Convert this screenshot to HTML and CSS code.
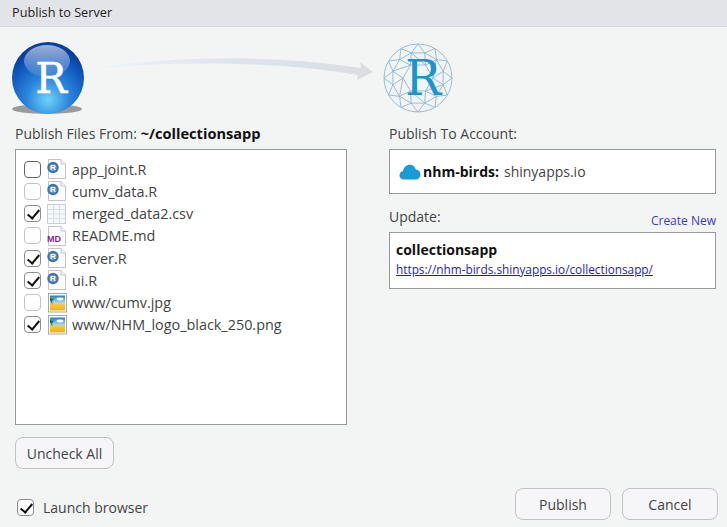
FILE: index.html
```html
<!DOCTYPE html>
<html lang="en">
  <head>
    <meta charset="UTF-8" />
    <title>Publish to Server</title>
    <link rel="stylesheet" href="styles.css">
  </head>

  <body>
    <svg class="defs" width="0" height="0">
      <defs>
        <radialGradient id="ball" cx="50%" cy="80%" r="70%">
          <stop offset="0" stop-color="#6fd3f6" />
          <stop offset="0.42" stop-color="#2b86dd" />
          <stop offset="0.8" stop-color="#1058bd" />
          <stop offset="1" stop-color="#0b3f9c" />
        </radialGradient>
        <linearGradient id="shine" x1="0" y1="0" x2="0" y2="1">
          <stop offset="0" stop-color="#fff" stop-opacity="0.6" />
          <stop offset="1" stop-color="#fff" stop-opacity="0.08" />
        </linearGradient>
        <linearGradient id="arrow" x1="0" y1="0" x2="1" y2="0">
          <stop offset="0" stop-color="#eef3f7" />
          <stop offset="0.5" stop-color="#dbe5ef" />
          <stop offset="1" stop-color="#dcdddf" />
        </linearGradient>
        <linearGradient id="sky" x1="0" y1="0" x2="0" y2="1">
          <stop offset="0" stop-color="#1f7fc4" />
          <stop offset="0.5" stop-color="#a9dcec" />
          <stop offset="0.56" stop-color="#f5cc3a" />
          <stop offset="1" stop-color="#eeb01c" />
        </linearGradient>
        <symbol id="page" viewBox="0 0 20 20">
          <path d="M1.5 .5H14L18.5 5V19.5H1.5Z" fill="#fff" stroke="#c4c4c8" />
          <path d="M14 .5V5H18.5" fill="#f3f3f3" stroke="#c4c4c8" />
        </symbol>
        <symbol id="r-file" viewBox="0 0 20 20">
          <use href="#page" width="20" height="20" />
          <circle cx="6" cy="8.5" r="5.7" fill="#3f74ad" />
          <circle cx="6" cy="8.5" r="3.6" fill="#6f9ac6" />
          <text x="6" y="11.4" class="badge-r">R</text>
        </symbol>
        <symbol id="md-file" viewBox="0 0 20 20">
          <use href="#page" width="20" height="20" />
          <text x="0" y="16" class="badge-md">MD</text>
        </symbol>
        <symbol id="csv-file" viewBox="0 0 20 20">
          <rect x=".5" y=".5" width="18" height="19" fill="#f6f9fc" stroke="#c6ced9" />
          <path d="M6.5 1V19M12.5 1V19M1 5.5H18M1 10H18M1 14.5H18" stroke="#d5dde8" fill="none" />
        </symbol>
        <symbol id="img-file" viewBox="0 0 20 20">
          <rect x="1.5" y=".5" width="18" height="18.5" fill="#fff" stroke="#a9a9a9" />
          <rect x="3" y="2.5" width="15" height="15" fill="url(#sky)" />
          <ellipse cx="13" cy="6" rx="3.5" ry="1.4" fill="#fff" />
          <path d="M3 5L7 6L5 8L5.5 10.5H4.5L4 8L3 8Z" fill="#2a6a3c" />
        </symbol>
      </defs>
    </svg>

    <div class="titlebar">Publish to Server</div>

    <svg class="graphic" viewBox="0 27 727 96" width="727" height="96">
      <path d="M90 69C170 56 270 54 361 68L360 62L373 72L357 80L358 75C280 62 180 60 90 69Z" fill="url(#arrow)" />
      <ellipse cx="47" cy="109" rx="35" ry="5" fill="#9a9a9a" />
      <circle cx="48" cy="78" r="36" fill="url(#ball)" />
      <ellipse cx="47" cy="61" rx="23" ry="16" fill="url(#shine)" />
      <text x="51" y="93" class="logo-r white">R</text>
      <g class="mesh">
        <circle cx="418" cy="78" r="34" />
        <path d="M452 78L443.1 71.3L447.4 61L436.4 59.6L435 48.6L424.7 52.9L418 44L411.3 52.9L401 48.6L399.6 59.6L388.6 61L392.9 71.3L384 78L392.9 84.7L388.6 95L399.6 96.4L401 107.4L411.3 103.1L418 112L424.7 103.1L435 107.4L436.4 96.4L447.4 95L443.1 84.7Z" />
        <path d="M443.1 71.3L436.4 59.6L424.7 52.9L411.3 52.9L399.6 59.6L392.9 71.3L392.9 84.7L399.6 96.4L411.3 103.1L424.7 103.1L436.4 96.4L443.1 84.7Z" />
        <path d="M433 78L425.5 65L410.5 65L403 78L410.5 91L425.5 91Z" />
        <path d="M433 78L443.1 71.3M433 78L443.1 84.7M433 78L436.4 59.6M425.5 65L436.4 59.6M425.5 65L424.7 52.9M425.5 65L411.3 52.9M410.5 65L411.3 52.9M410.5 65L399.6 59.6M410.5 65L392.9 71.3M403 78L392.9 71.3M403 78L392.9 84.7M403 78L399.6 96.4M410.5 91L399.6 96.4M410.5 91L411.3 103.1M410.5 91L424.7 103.1M425.5 91L424.7 103.1M425.5 91L436.4 96.4M425.5 91L443.1 84.7" />
      </g>
      <text x="423" y="95" class="logo-r blue">R</text>
    </svg>

    <div class="main">
      <div class="left">
        <div class="label">Publish Files From: <b>~/collectionsapp</b></div>
        <ul class="files">
          <li><span class="check focus"></span><svg class="ficon"><use href="#r-file" /></svg>app_joint.R</li>
          <li><span class="check"></span><svg class="ficon"><use href="#r-file" /></svg>cumv_data.R</li>
          <li><span class="check on"></span><svg class="ficon"><use href="#csv-file" /></svg>merged_data2.csv</li>
          <li><span class="check"></span><svg class="ficon"><use href="#md-file" /></svg>README.md</li>
          <li><span class="check on"></span><svg class="ficon"><use href="#r-file" /></svg>server.R</li>
          <li><span class="check on"></span><svg class="ficon"><use href="#r-file" /></svg>ui.R</li>
          <li><span class="check"></span><svg class="ficon"><use href="#img-file" /></svg>www/cumv.jpg</li>
          <li><span class="check on"></span><svg class="ficon"><use href="#img-file" /></svg>www/NHM_logo_black_250.png</li>
        </ul>
        <button class="btn uncheck">Uncheck All</button>
      </div>

      <div class="right">
        <div class="label">Publish To Account:</div>
        <div class="box account">
          <svg class="cloud" viewBox="0 0 22 16" width="22" height="16">
            <path d="M5 15.5C2 15.5 .5 13.5 .5 11.2C.5 9 2 7.4 4 7C4.6 3.4 7.4 .8 10.8 .8C13.8 .8 16 2.8 16.8 5.4C19.6 5.6 21.5 7.8 21.5 10.5C21.5 13.4 19.4 15.5 16.6 15.5Z" fill="#1a9ad6" />
          </svg>
          <b>nhm-birds:</b> shinyapps.io
        </div>
        <div class="update-head">
          <span>Update:</span>
          <a class="create" href="#">Create New</a>
        </div>
        <div class="box app">
          <b>collectionsapp</b>
          <a class="url" href="#">https://nhm-birds.shinyapps.io/collectionsapp/</a>
        </div>
      </div>
    </div>

    <div class="footer">
      <label class="launch"><span class="check on"></span>Launch browser</label>
      <div class="actions">
        <button class="btn wide">Publish</button>
        <button class="btn wide">Cancel</button>
      </div>
    </div>
  </body>
</html>
```

FILE: styles.css
```css
* {
  margin: 0;
  padding: 0;
  box-sizing: border-box;
}

html,
body {
  width: 727px;
  height: 527px;
  overflow: hidden;
}

body {
  display: flex;
  flex-direction: column;
  background-color: #f3f5f5;
  font-family: "Open Sans", "Noto Sans", sans-serif;
  font-size: 14px;
  color: #333;
}

.defs {
  position: absolute;
}

.titlebar {
  height: 27px;
  padding-left: 12px;
  background-color: #e2e4e7;
  border-bottom: 1px solid #d8dadd;
  font-size: 12.7px;
  line-height: 25px;
  color: #222;
}

.graphic {
  display: block;
  flex: none;
}

.logo-r {
  font-family: "DejaVu Serif", serif;
  font-size: 48px;
  text-anchor: middle;
}

.logo-r.white {
  font-size: 42px;
  fill: #fff;
  stroke: #fff;
  stroke-width: 0.5;
}

.logo-r.blue {
  fill: #1a95cf;
}

.mesh * {
  fill: none;
  stroke: #8ab8da;
  stroke-width: 0.9;
}

.badge-r {
  font-family: "Liberation Sans", sans-serif;
  font-size: 8px;
  font-weight: bold;
  fill: #fff;
  text-anchor: middle;
}

.badge-md {
  font-family: "Liberation Sans", sans-serif;
  font-size: 9px;
  font-weight: bold;
  fill: #8a1a9b;
}

.main {
  display: grid;
  grid-template-columns: 332px 327px;
  column-gap: 42px;
  padding-left: 15px;
}

.label {
  height: 26px;
  line-height: 22px;
  color: #444;
}

.label b {
  font-size: 14.6px;
  line-height: 1;
  color: #111;
}

.files {
  height: 276px;
  padding-top: 8px;
  list-style-type: none;
  background-color: #fff;
  border: 1px solid #999;
}

.files li {
  display: flex;
  align-items: center;
  height: 22.25px;
  padding-left: 8px;
  font-size: 14.4px;
  color: #444;
}

.check {
  flex: none;
  position: relative;
  width: 17px;
  height: 17px;
  background-color: #fff;
  border: 1px solid #c4c4c4;
  border-radius: 4px;
}

.check.focus {
  border-color: #666;
}

.check.on {
  border-color: #8d8d8d;
}

.check.on::after {
  content: "";
  position: absolute;
  left: 5px;
  top: 1px;
  width: 5px;
  height: 10px;
  border: solid #111;
  border-width: 0 2px 2px 0;
  transform: rotate(40deg);
}

.ficon {
  flex: none;
  width: 20px;
  height: 20px;
  margin: 0 5px 0 6px;
}

.btn {
  height: 32px;
  background-color: #f6f6f8;
  border: 1px solid #c2c2c2;
  border-radius: 8px;
  font-family: inherit;
  font-size: 14px;
  color: #444;
}

.uncheck {
  display: block;
  width: 99px;
  margin-top: 12px;
}

.box {
  background-color: #fff;
  border: 1px solid #999;
}

.account {
  display: flex;
  align-items: center;
  gap: 4px;
  height: 45px;
  padding-left: 9px;
  color: #444;
}

.account b {
  margin: 0 1px 0 -2px;
  color: #111;
}

.update-head {
  display: flex;
  justify-content: space-between;
  height: 38px;
  padding-top: 12px;
  line-height: 22px;
  color: #444;
}

.create {
  padding-top: 4px;
  font-size: 12px;
  color: #3a3acb;
  text-decoration: none;
}

.app {
  display: flex;
  flex-direction: column;
  height: 57px;
  padding: 7px 6px 0;
}

.app b {
  color: #111;
}

.url {
  margin-top: 2px;
  font-size: 11.8px;
  color: #1a1ad6;
}

.footer {
  display: flex;
  justify-content: space-between;
  align-items: flex-end;
  margin-top: auto;
  padding: 0 9px 7px 17px;
}

.launch {
  display: flex;
  align-items: center;
  gap: 9px;
  padding-bottom: 3px;
  color: #444;
}

.actions {
  display: flex;
  gap: 11px;
}

.wide {
  width: 96px;
}
```
